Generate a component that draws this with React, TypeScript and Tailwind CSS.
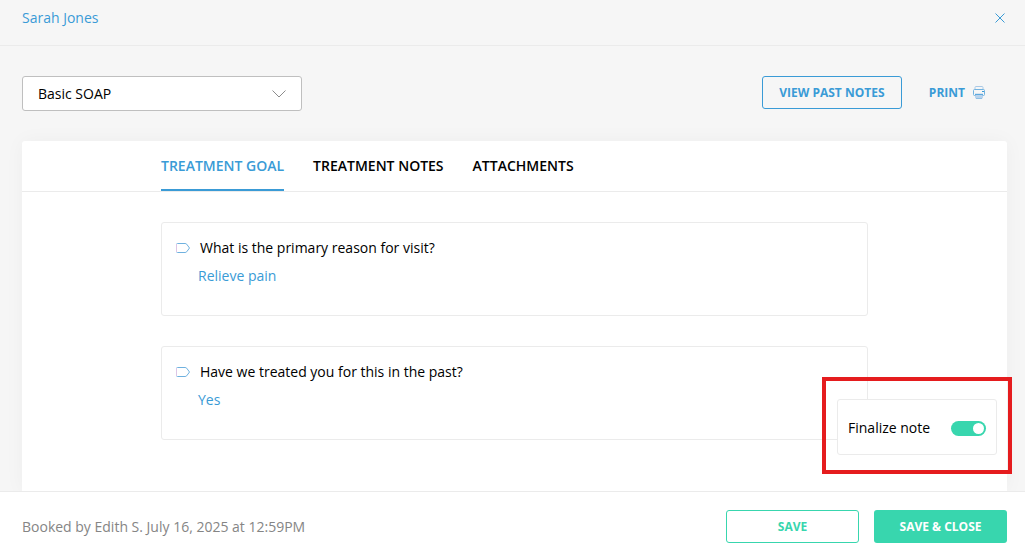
import { useState } from 'react';

const tabs = ['Treatment Goal', 'Treatment Notes', 'Attachments'];

const questions = [
  { question: 'What is the primary reason for visit?', answer: 'Relieve pain' },
  { question: 'Have we treated you for this in the past?', answer: 'Yes' },
];

function CloseIcon() {
  return (
    <svg width="10" height="10" viewBox="0 0 10 10" fill="none" stroke="#3a9bd6" aria-hidden="true">
      <path d="M0.5 0.5l9 9M9.5 0.5l-9 9" />
    </svg>
  );
}

function ChevronIcon() {
  return (
    <svg
      className="pointer-events-none absolute top-[14px] right-4"
      width="14"
      height="8"
      viewBox="0 0 14 8"
      fill="none"
      stroke="#8c8c8c"
      aria-hidden="true"
    >
      <path d="M0.5 0.5L7 7l6.500-6.500" />
    </svg>
  );
}

function PrinterIcon() {
  return (
    <svg width="12" height="13" viewBox="0 0 12 13" fill="none" aria-hidden="true">
      <path d="M2 3.500V1.500a1 1 0 0 1 1-1h6a1 1 0 0 1 1 1v2" stroke="#a9c9e6" />
      <path d="M2 7.500h8v4a1 1 0 0 1-1 1H3a1 1 0 0 1-1-1z" fill="#b9d3ec" />
      <path d="M2.500 9.500h-1a1 1 0 0 1-1-1v-4a1 1 0 0 1 1-1h9a1 1 0 0 1 1 1v4a1 1 0 0 1-1 1h-1" stroke="#72b3e0" />
      <path d="M2 8.500h8" stroke="#5ea9dd" />
      <path d="M3 12.500h6" stroke="#8fbfe3" />
      <path d="M9 5.500h2" stroke="#3a9bd6" />
    </svg>
  );
}

function TagIcon() {
  return (
    <svg className="shrink-0" width="14" height="10" viewBox="0 0 14 10" fill="none" aria-hidden="true">
      <path
        d="M1.500 0.500h7.500q1 0 1.700 0.700L13.500 5l-2.800 3.800Q10 9.500 9 9.500H1.500q-1 0-1-1v-7q0-1 1-1z"
        stroke="#6fb1df"
      />
      <path d="M0.500 1v8" stroke="#dcc6e6" />
    </svg>
  );
}

export default function App() {
  const [active, setActive] = useState(0);
  const [finalized, setFinalized] = useState(true);

  return (
    <div className="flex min-h-screen flex-col bg-[#f6f6f6] font-['Open_Sans',sans-serif] text-sm text-black">
      <header className="flex items-start justify-between border-b border-[#ebebeb] px-[22px] pt-2 pb-[17px]">
        <a href="#patient" className="leading-5 text-[#3a9bd6]">
          Sarah Jones
        </a>
        <button type="button" aria-label="Close" className="mr-[-2px] flex h-5 items-center">
          <CloseIcon />
        </button>
      </header>

      <main className="relative flex flex-1 flex-col pt-[30px] pr-[18px] pl-[22px]">
        <div className="flex items-start justify-between pr-[22px]">
          <div className="relative w-[280px]">
            <select
              aria-label="Note template"
              className="h-[35px] w-full appearance-none rounded-[3px] border border-[#bfbfbf] bg-white pr-10 pl-[15px]"
            >
              <option>Basic SOAP</option>
            </select>
            <ChevronIcon />
          </div>
          <div className="flex items-center gap-[27px] text-xs font-bold text-[#3a9bd6]">
            <button type="button" className="h-[33px] w-[140px] rounded-[3px] border border-[#3a9bd6]">
              VIEW PAST NOTES
            </button>
            <button type="button" className="flex items-center gap-2">
              PRINT
              <PrinterIcon />
            </button>
          </div>
        </div>

        <section className="mt-[30px] flex-1 rounded-t-[3px] bg-white shadow-[0_0_20px_rgba(0,0,0,0.04)]">
          <div className="border-b border-[#ebebeb]">
            <div role="tablist" className="mx-auto flex max-w-[707px] gap-[29px]">
              {tabs.map((tab, i) => (
                <button
                  key={tab}
                  type="button"
                  role="tab"
                  aria-selected={i === active}
                  onClick={() => setActive(i)}
                  className={`h-[50px] border-b-2 pt-[2px] font-semibold uppercase ${
                    i === active ? 'border-[#3a9bd6] text-[#3a9bd6]' : 'border-transparent'
                  }`}
                >
                  {tab}
                </button>
              ))}
            </div>
          </div>
          <div className="mx-auto flex max-w-[707px] flex-col gap-[30px] py-[30px]">
            {questions.map(({ question, answer }) => (
              <article key={question} className="h-[94px] rounded-[3px] border border-[#ebebeb] px-[14px] pt-[15px]">
                <div className="flex items-center gap-[10px] leading-5">
                  <TagIcon />
                  <h2>{question}</h2>
                </div>
                <p className="mt-2 pl-[22px] leading-5 text-[#3a9bd6]">{answer}</p>
              </article>
            ))}
          </div>
        </section>

        <div className="absolute right-[13px] bottom-[17px] border-4 border-[#e51c1e] px-[11px] pt-[18px] pb-[15px]">
          <label className="flex h-14 w-40 items-center justify-between rounded-[3px] border border-[#ebebeb] bg-white px-[10px] pt-[2px]">
            Finalize note
            <input
              type="checkbox"
              role="switch"
              checked={finalized}
              onChange={(e) => setFinalized(e.target.checked)}
              className="flex h-[15px] w-[35px] appearance-none items-center rounded-full bg-[#c4c4c4] px-[2px] before:size-[11px] before:rounded-full before:bg-white checked:justify-end checked:bg-[#38d6ae]"
            />
          </label>
        </div>
      </main>

      <footer className="relative flex items-center justify-between border-t border-[#ebebeb] bg-white pt-[18px] pr-[18px] pb-[14px] pl-[22px]">
        <p className="text-[#858585]">Booked by Edith S. July 16, 2025 at 12:59PM</p>
        <div className="flex gap-[15px] text-xs font-bold">
          <button type="button" className="h-[33px] w-[133px] rounded-[3px] border border-[#38d6ae] text-[#38d6ae]">
            SAVE
          </button>
          <button type="button" className="h-[33px] w-[133px] rounded-[3px] bg-[#38d6ae] text-white">
            SAVE &amp; CLOSE
          </button>
        </div>
      </footer>
    </div>
  );
}
